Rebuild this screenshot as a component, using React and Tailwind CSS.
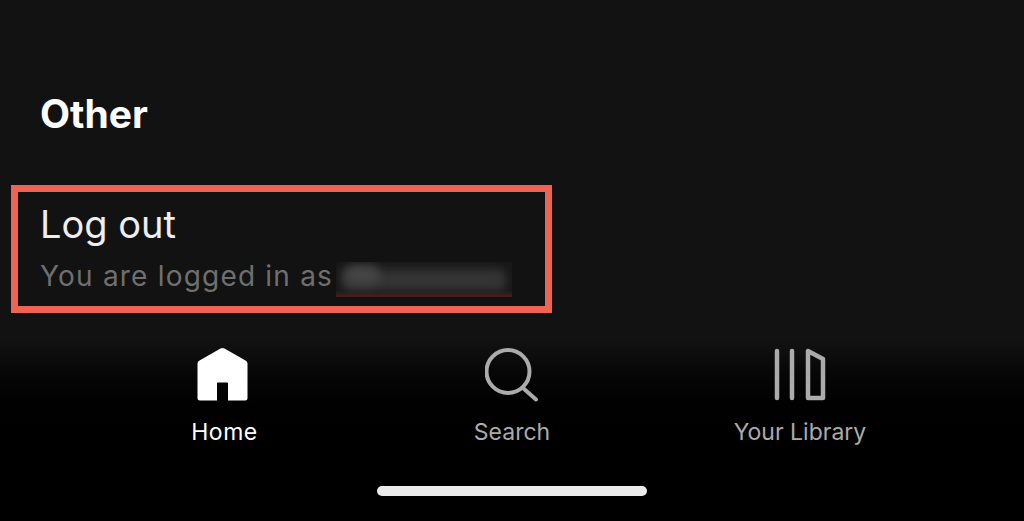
export default function App() {
  return (
    <div className="flex h-[521px] w-[1024px] flex-col overflow-hidden bg-[#121212] font-['Inter',sans-serif]">
      {/* Section heading */}
      <h2 className="mt-[92px] ml-[40px] text-[39px] leading-[44px] font-bold text-white">Other</h2>

      {/* Highlighted log out row */}
      <div className="mt-[49px] ml-[11px] h-[128px] w-[541px] shrink-0 border-[7px] border-[#ee6352] pt-[10px] pl-[22px]">
        <div className="text-[38px] leading-[44px] text-[#eeeeee]">Log out</div>
        <div className="mt-[12px] flex items-start text-[28px] leading-[36px] tracking-[1.2px] text-[#6f6f6f]">
          <span>You are logged in as</span>
          <div className="relative mt-[4px] ml-[3px] h-[35px] w-[176px] overflow-hidden bg-[#171717]">
            <div className="absolute top-[7px] left-[6px] h-[22px] w-[164px] rounded-md bg-[#343434] blur-[5px]" />
            <div className="absolute top-[3px] left-[8px] h-[20px] w-[36px] rounded-full bg-[#444444] blur-[5px]" />
            <div className="absolute inset-x-0 bottom-0 h-[7px] bg-gradient-to-b from-transparent to-[#4a1f1a]" />
          </div>
        </div>
      </div>

      {/* Bottom tab bar */}
      <div className="mt-[28px] flex flex-1 flex-col bg-gradient-to-b from-[#121212] to-black to-60%">
        <div className="flex justify-center pt-[7px]">
          <div className="flex w-[288px] flex-col items-center">
            <svg width="54" height="54" viewBox="0 0 54 54">
              <path d="M25.5 0 Q26.5 0 27.5 0.6 L48.5 12.5 Q50.5 13.6 50.5 15.5 V50 Q50.5 52.5 48 52.5 H31 V35.5 Q31 34.5 30 34.5 H21 Q20 34.5 20 35.5 V52.5 H3 Q0.5 52.5 0.5 50 V15.5 Q0.5 13.6 2.5 12.5 L23.5 0.6 Q24.5 0 25.5 0 Z" fill="#ffffff" />
            </svg>
            <span className="mt-[14px] ml-[1px] text-[23px] leading-[32px] tracking-[0.5px] text-white">Home</span>
          </div>
          <div className="flex w-[288px] flex-col items-center">
            <svg width="54" height="54" viewBox="0 0 54 54" fill="none" stroke="#ababab" strokeWidth="4" strokeLinecap="round">
              <circle cx="23" cy="23.5" r="21.5" />
              <path d="M38 40 L51 51.5" />
            </svg>
            <span className="mt-[14px] text-[23px] leading-[32px] text-[#ababab]">Search</span>
          </div>
          <div className="flex w-[288px] flex-col items-center">
            <svg width="54" height="54" viewBox="0 0 54 54" fill="none" stroke="#ababab" strokeWidth="4.5" strokeLinecap="round" strokeLinejoin="round">
              <path d="M4 3 V50" />
              <path d="M19 3 V50" />
              <path d="M35 3 V50 H50 V11 Z" />
            </svg>
            <span className="mt-[14px] text-[23px] leading-[32px] text-[#ababab]">Your Library</span>
          </div>
        </div>

        {/* Home indicator */}
        <div className="mt-[38px] h-[10px] w-[270px] shrink-0 self-center rounded-full bg-[#ebebeb]" />
      </div>
    </div>
  );
}
